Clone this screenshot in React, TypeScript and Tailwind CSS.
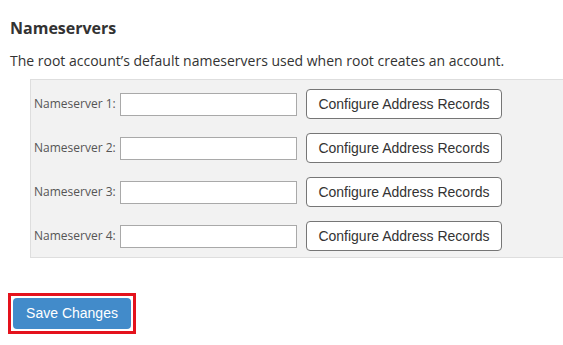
const servers = [1, 2, 3, 4];

export default function App() {
  return (
    <div className="w-[563px] h-[345px] overflow-hidden bg-white px-[10px] font-['Open_Sans',sans-serif] text-[#333]">
      <h2 className="pt-[18px] text-[16px] leading-[20px] font-bold">Nameservers</h2>
      <p className="mt-[13px] text-[14px] leading-[20px]">
        The root account’s default nameservers used when root creates an account.
      </p>
      <div className="mt-[8px] ml-[20px] w-[560px] border border-[#dedede] bg-[#f2f2f2] pt-[9px] pb-[6px] pl-[3px]">
        <div className="flex flex-col gap-[14px]">
          {servers.map(n => (
            <div key={n} className="flex items-center">
              <label className="w-[86px] text-[12px] leading-[16px] text-[#555]">Nameserver {n}:</label>
              <input
                type="text"
                className="h-[23px] w-[177px] border border-[#a9a9a9] bg-white px-1 text-[12px] outline-none"
              />
              <button
                type="button"
                className="ml-[9px] h-[30px] w-[196px] rounded-[4px] border border-[#767676] bg-white font-['Liberation_Sans',Arial,sans-serif] text-[14px] text-[#333]"
              >
                Configure Address Records
              </button>
            </div>
          ))}
        </div>
      </div>
      <div className="mt-[35px] ml-[-2px] inline-block border-[3px] border-[#e4121c] p-[2px]">
        <button
          type="button"
          className="block h-[31px] w-[118px] rounded-[4px] bg-[#428bca] font-['Liberation_Sans',Arial,sans-serif] text-[14px] text-white"
        >
          Save Changes
        </button>
      </div>
    </div>
  );
}
